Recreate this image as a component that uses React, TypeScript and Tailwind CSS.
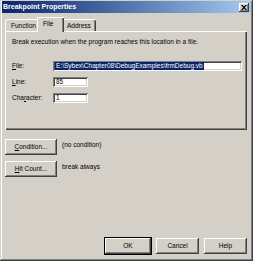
const raised =
  'shadow-[inset_-1px_-1px_0_#404040,inset_1px_1px_0_#ffffff,inset_-2px_-2px_0_#808080]'
const sunken =
  'shadow-[inset_1px_1px_0_#808080,inset_-1px_-1px_0_#ffffff,inset_2px_2px_0_#404040,inset_-2px_-2px_0_#d4d0c8]'

function Button({ children, width, primary }: { children: React.ReactNode; width: string; primary?: boolean }) {
  return (
    <div
      className={`${width} h-[16px] flex items-center justify-center bg-[#d4d0c8] ${raised} ${
        primary ? 'outline outline-1 outline-black' : ''
      }`}
    >
      {children}
    </div>
  )
}

function Field({ label, value, width, selected }: { label: React.ReactNode; value: string; width: string; selected?: boolean }) {
  return (
    <div className="flex items-center h-[10px]">
      <div className="w-[41px]">{label}</div>
      <div className={`${width} h-[10px] bg-white flex items-center pl-[2px] ${sunken}`}>
        <span className={selected ? 'bg-[#0a246a] text-white px-[1px]' : 'px-[1px]'}>{value}</span>
      </div>
    </div>
  )
}

export default function App() {
  return (
    <div
      className="w-[253px] h-[261px] bg-[#d4d0c8] text-[6.5px] leading-[8px] text-black flex flex-col shadow-[inset_-1px_-1px_0_#404040,inset_1px_1px_0_#d4d0c8,inset_-2px_-2px_0_#808080,inset_2px_2px_0_#ffffff]"
      style={{ fontFamily: '"Liberation Sans", Arial, sans-serif' }}
    >
      {/* title bar */}
      <div className="mx-[2px] mt-[1px] h-[12px] flex items-center justify-between bg-gradient-to-r from-[#0a246a] to-[#a6caf0] pl-[1px] pr-[2px]">
        <span className="text-white font-bold text-[7px]">Breakpoint Properties</span>
        <div className={`w-[10px] h-[9px] bg-[#d4d0c8] flex items-center justify-center ${raised}`}>
          <svg width="6" height="5" viewBox="0 0 6 5">
            <path d="M0 0h1.5l1.5 1.6 1.5-1.6h1.5l-2.2 2.5 2.2 2.5h-1.5l-1.5-1.6-1.5 1.6h-1.5l2.2-2.5z" fill="#000" />
          </svg>
        </div>
      </div>

      <div className="px-[5px] flex flex-col flex-1">
        {/* tabs */}
        <div className="flex items-end h-[16px] mt-[2px] relative z-10">
          <div className="w-[32px] h-[12px] flex items-center pl-[5px] border-t border-l border-white rounded-tl-[2px]">
            Function
          </div>
          <div className="w-[27px] h-[15px] -mb-[1px] bg-[#d4d0c8] flex items-start pl-[5px] pt-[2px] border-t border-l border-white rounded-tl-[2px] shadow-[inset_-1px_0_0_#404040,inset_-2px_0_0_#808080]">
            File
          </div>
          <div className="w-[32px] h-[12px] flex items-center pl-[3px] border-t border-white rounded-tr-[2px] shadow-[inset_-1px_0_0_#404040,inset_-2px_0_0_#808080]">
            Address
          </div>
        </div>

        {/* panel */}
        <div className="w-[242px] h-[99px] border-t border-l border-white shadow-[inset_-1px_-1px_0_#404040,inset_-2px_-2px_0_#808080] pt-[6px] pl-[6px]">
          <p>Break execution when the program reaches this location in a file.</p>
          <div className="mt-[15px] flex flex-col gap-[6px]">
            <Field
              label={<><u>F</u>ile:</>}
              value="E:\Sybex\Chapter08\DebugExamples\frmDebug.vb"
              width="w-[189px]"
              selected
            />
            <Field label={<><u>L</u>ine:</>} value="85" width="w-[35px]" />
            <Field label={<>Cha<u>r</u>acter:</>} value="1" width="w-[35px]" />
          </div>
        </div>

        {/* condition rows */}
        <div className="mt-[9px] flex items-start gap-[5px]">
          <Button width="w-[52px]">
            <u>C</u>ondition...
          </Button>
          <span className="mt-[2px]">(no condition)</span>
        </div>
        <div className="mt-[6px] flex items-start gap-[5px]">
          <Button width="w-[52px]">
            <u>H</u>it Count...
          </Button>
          <span className="mt-[2px]">break always</span>
        </div>

        {/* dialog buttons */}
        <div className="mt-auto mb-[7px] flex justify-end gap-[5px] pr-[1px]">
          <Button width="w-[46px]" primary>
            OK
          </Button>
          <Button width="w-[43px]">Cancel</Button>
          <Button width="w-[43px]">Help</Button>
        </div>
      </div>
    </div>
  )
}
